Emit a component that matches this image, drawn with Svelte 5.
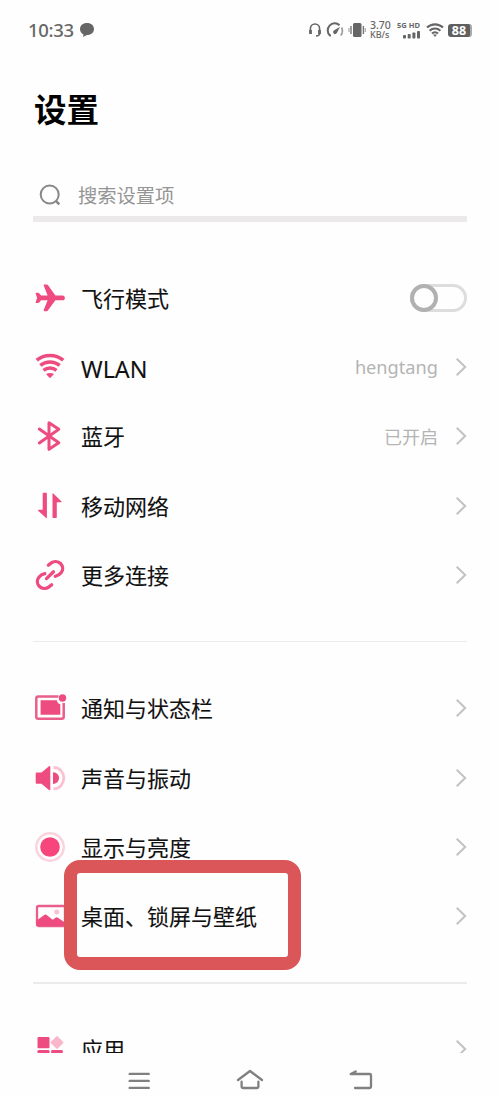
<script>
  const groups = [
    [
      { icon: 'plane', label: '飞行模式', toggle: true },
      { icon: 'wifi', label: 'WLAN', value: 'hengtang', latin: true },
      { icon: 'bluetooth', label: '蓝牙', value: '已开启' },
      { icon: 'data', label: '移动网络' },
      { icon: 'link', label: '更多连接' },
    ],
    [
      { icon: 'notify', label: '通知与状态栏' },
      { icon: 'sound', label: '声音与振动' },
      { icon: 'display', label: '显示与亮度' },
      { icon: 'wallpaper', label: '桌面、锁屏与壁纸', marked: true },
    ],
    [{ icon: 'apps', label: '应用' }],
  ];
</script>

<div class="phone">
  <header class="status">
    <span class="time">10:33</span>
    <svg class="bubble" width="16" height="16" viewBox="0 0 16 16" fill="#666">
      <path d="M8 1C3.800 1 1 3.600 1 7c0 2.500 1.300 4.400 3.500 5.400L4 15l4-2c4.200 0 7-2.600 7-6S12.200 1 8 1z" />
    </svg>
    <div class="tray">
      <svg width="14" height="16" viewBox="0 0 14 16" fill="none" stroke="#666" stroke-width="1.600">
        <path d="M2.400 10V6.800a4.600 4.800 0 0 1 9.200 0V11c0 2-1 3-3.600 3" />
        <path d="M2.500 8v4M11.500 8v4" stroke-width="2.800" />
      </svg>
      <svg width="18" height="16" viewBox="0 0 18 16" fill="none" stroke="#666" stroke-width="2">
        <path d="M5 13.600H4A6.900 6.900 0 0 1 13.500 3.200" />
        <path d="M15.500 5.500c1.400 2.600 1 5.700-.8 8" stroke="#999" stroke-width="1.600" />
        <path d="M14 4.800L11 10.800A2 2 0 1 1 8.300 8.300z" fill="#666" stroke="none" />
      </svg>
      <svg width="18" height="16" viewBox="0 0 18 16" fill="#666">
        <rect x="5" y="1" width="8.500" height="14" rx="1.500" />
        <path d="M3 4v8M15.400 4v8" stroke="#777" stroke-width="1.400" />
        <path d="M1 6v4M17.300 6v4" stroke="#aaa" stroke-width="1.200" />
      </svg>
      <div class="speed"><span>3.70</span><span>KB/s</span></div>
      <div class="cell">
        <span>5G HD</span>
        <svg width="18" height="9" viewBox="0 0 18 9" fill="#666">
          <rect x="0" y="5" width="3" height="3.500" rx=".8" /><rect x="4.700" y="4" width="3" height="4.500" rx=".8" />
          <rect x="9.400" y="2.500" width="3" height="6" rx=".8" /><rect x="14" y="1" width="3" height="7.500" rx=".8" />
        </svg>
      </div>
      <svg class="net" width="18" height="16" viewBox="0 0 18 16" fill="none" stroke="#666" stroke-width="2.100">
        <path d="M1 5.600a11.500 11.500 0 0 1 16 0M3.600 8.700a7.800 7.800 0 0 1 10.800 0M6 11.500a4.300 4.300 0 0 1 6 0" />
        <path d="M7 12.600h4L9 15z" fill="#666" stroke="none" />
      </svg>
      <div class="battery">88</div>
    </div>
  </header>

  <h1>设置</h1>

  <div class="search">
    <svg width="24" height="24" viewBox="0 0 24 24" fill="none" stroke="#888" stroke-width="2">
      <circle cx="11.700" cy="11.500" r="9" /><path d="M18 18l3.300 3.300" stroke-width="2.500" />
    </svg>
    <span>搜索设置项</span>
  </div>

  <main>
    {#each groups as group}
      <section>
        {#each group as row}
          <div class="row" class:latin={row.latin}>
            <svg class="icon" width="32" height="32" viewBox="0 0 32 32" fill="#ee4c80">
              {#if row.icon === 'plane'}
                <path d="M2.400 10.700h1.700c.5 0 .8.200 1 .5l2 2.300h6.500L9.700 3.600c-.2-.7.100-1.200.8-1.200h2.300c.5 0 .8.200 1.100.6l7.500 10.500h7c1.600 0 2.500 1.100 2.500 2.400s-.9 2.400-2.500 2.400h-7l-7.500 10.300c-.3.400-.6.600-1.100.6h-2.300c-.7 0-1-.5-.8-1.200l3.900-9.700H7.100l-2 2.300c-.2.300-.5.500-1 .5H2.400c-.6 0-.9-.4-.7-1l1.400-4.100-1.400-4.300c-.2-.6.100-1 .7-1z" />
              {:else if row.icon === 'wifi'}
                <g fill="none" stroke="#ee4c80" stroke-width="3.500">
                  <path d="M2.700 9.200a21 21 0 0 1 26.600 0M6.300 14.300a15.500 15.500 0 0 1 19.400 0M9.500 19.300a10.500 10.500 0 0 1 13 0" />
                </g>
                <path d="M12 23.100q4-2.200 8 0l-3.200 3.500q-.8.800-1.600 0z" />
              {:else if row.icon === 'bluetooth'}
                <path d="M5.300 9.100L24.800 22.800 15 29.300V2.700l9.800 6.500L5.300 22.900" fill="none" stroke="#ee4c80" stroke-width="3" stroke-linejoin="round" stroke-linecap="round" />
              {:else if row.icon === 'data'}
                <path d="M8.700 3.600q0-.8.800-.8h2.600q.8 0 .8.800v24q0 1-.8.400L4.200 20.700q-.8-1 .3-1h4.200z" />
                <path d="M18.500 3.900q0-1 .8-.4l8 7.800q.8 1-.3 1h-4.200v15q0 .8-.8.800h-2.700q-.8 0-.8-.8z" />
              {:else if row.icon === 'link'}
                <g fill="none" stroke="#ee4c80" stroke-width="3.300" stroke-linecap="round">
                  <path d="M14.300 6.300l2.700-2.200c3-2.300 7-2 9.500.4 2.700 2.700 2.800 6.500.6 9.300-1.300 1.700-3.400 3-5.900 3.500" />
                  <path d="M17.700 25.700L15 27.900c-3 2.300-7 2-9.500-.4-2.700-2.700-2.800-6.500-.6-9.300 1.300-1.700 3.400-3 5.900-3.500" />
                  <path d="M12.500 19.600l7-6.800" />
                </g>
              {:else if row.icon === 'notify'}
                <path d="M24.500 4.500H4.300a2 2 0 0 0-2 2v18.300a2 2 0 0 0 2 2h23.400a2 2 0 0 0 2-2V11" fill="none" stroke="#e95e8a" stroke-width="2.500" />
                <path d="M6.600 8.300h16.300q.3 3 3.400 4v10.500H6.600z" />
                <circle cx="28.500" cy="6" r="3.700" />
              {:else if row.icon === 'sound'}
                <path d="M2.700 10.500h4.800L15 4.300q1.300-.9 1.300.6v22.400q0 1.500-1.300.6l-7.500-6.200H2.700q-1 0-1-1v-9.200q0-1 1-1z" />
                <path d="M19 10.300c8 .4 8 11.200 0 11.600z" />
                <path d="M19.500 5.300c13.700.4 13.700 21.200 0 21.600" fill="none" stroke="#fac1d2" stroke-width="2.800" />
              {:else if row.icon === 'display'}
                <circle cx="16" cy="16" r="13.700" fill="none" stroke="#fad3de" stroke-width="2.500" />
                <circle cx="16" cy="16" r="9.800" fill="#f7467b" />
              {:else if row.icon === 'wallpaper'}
                <rect x="3" y="6" width="28" height="20" rx="1.500" fill="none" stroke="#e95e8a" stroke-width="2.300" />
                <path d="M2.500 20.500l8.200-5.700q1-.5 2 .2l6 4.800 3.200-2.300q1-.5 2 .2l7 4.800V26H2.500z" />
                <circle cx="22.700" cy="12" r="2.500" fill="#fac1d2" />
              {:else}
                <rect x="3.500" y="4" width="12" height="11.300" rx="1" />
                <rect x="18.200" y="4.700" width="9.600" height="9.600" rx="1" fill="#fab6cb" transform="rotate(45 23 9.500)" />
                <rect x="3.500" y="17" width="12" height="12" rx="1.300" />
                <rect x="17.200" y="17" width="11.600" height="12" rx="1.300" />
              {/if}
            </svg>
            <span class="label">{row.label}{#if row.marked}<i class="mark"></i>{/if}</span>
            {#if row.toggle}
              <span class="switch"><i></i></span>
            {:else}
              {#if row.value}<span class="value">{row.value}</span>{/if}
              <svg class="chevron" width="12" height="20" viewBox="0 0 12 20" fill="none" stroke="#c2c2c2" stroke-width="2">
                <path d="M1.700 1.700L10.200 10l-8.500 8.300" />
              </svg>
            {/if}
          </div>
        {/each}
      </section>
    {/each}
  </main>

  <nav>
    <svg width="28" height="28" viewBox="0 0 28 28" fill="none" stroke="#808080" stroke-width="2.400" stroke-linecap="round">
      <path d="M4.700 6.900h19M4.700 13.900h19M4.700 20.900h19" />
    </svg>
    <svg width="28" height="28" viewBox="0 0 28 28" fill="none" stroke="#808080" stroke-width="2.300" stroke-linecap="round" stroke-linejoin="round">
      <path d="M2 13L14 4l12 9M5.600 14.700v4.600q0 1.700 1.700 1.700h13.400q1.700 0 1.700-1.700v-4.600" />
    </svg>
    <svg width="28" height="28" viewBox="0 0 28 28" fill="none" stroke="#808080" stroke-width="2.300" stroke-linecap="round" stroke-linejoin="round">
      <path d="M8.700 4.500L3.700 7h19q1.300 0 1.300 1.300v11.400q0 1.300-1.300 1.300H8" />
    </svg>
  </nav>
</div>

<style>
  :global(body) { background: #fefefe; }
  .phone {
    width: 500px;
    height: 1097px;
    display: flex;
    flex-direction: column;
    overflow: hidden;
    background: #fefefe;
    font-family: "Noto Sans CJK SC", sans-serif;
    color: #111;
  }
  .status {
    display: flex;
    align-items: center;
    height: 60px;
    padding: 0 28px;
    box-sizing: border-box;
    flex: none;
    color: #666;
  }
  .time { font: 500 18.500px/24px "Noto Sans", sans-serif; letter-spacing: -.3px; width: 45px; white-space: nowrap; }
  .bubble { margin-left: 6px; }
  .tray { display: flex; align-items: center; margin-left: auto; }
  .tray > svg { margin-right: 4px; }
  .speed, .cell { display: flex; flex-direction: column; font-family: "Noto Sans", sans-serif; font-weight: 500; white-space: nowrap; }
  .speed { width: 23px; font-size: 10.500px; line-height: 9px; }
  .speed span:last-child { font-size: 9px; }
  .cell { width: 24px; margin-left: 4px; font-size: 7.500px; line-height: 9px; font-weight: 700; }
  .cell svg { align-self: flex-end; }
  .net { margin-left: 5px; }
  .battery {
    width: 22px;
    height: 13px;
    border-radius: 3px;
    border-right: 2px solid #aaa;
    background: #606060;
    color: #fff;
    font: 700 12.500px/13px "Noto Sans", sans-serif;
    text-align: center;
  }
  h1 { margin: 24px 0 0 34px; font-size: 32.500px; line-height: 48px; font-weight: 700; color: #000; }
  .search {
    display: flex;
    align-items: center;
    height: 42px;
    margin: 42px 33px 0;
    padding: 0 5px;
    border-bottom: 6px solid #ece9ea;
    color: #959595;
    font-size: 19.300px;
    flex: none;
  }
  .search span { margin-left: 16px; line-height: 28px; }
  main { margin-top: 41px; height: 790px; overflow: hidden; flex: none; }
  section { padding: 0 34px; }
  section + section { margin-top: 31px; padding-top: 32.500px; position: relative; }
  section + section::before { content: ""; position: absolute; left: 33px; right: 33px; top: 0; height: 1.500px; background: #ebebeb; }
  .row { display: flex; align-items: center; height: 69.400px; }
  .icon { flex: none; overflow: visible; }
  .label { position: relative; margin: -2px 0 0 15px; font-size: 22px; line-height: 32px; white-space: nowrap; -webkit-text-stroke: .1px #111; }
  .latin .label, .latin .value { font-family: "Noto Sans", sans-serif; }
  .latin .label { margin-top: 3px; font-size: 23.300px; }
  .latin .value { font-size: 18.200px; }
  .mark {
    position: absolute;
    left: -17.500px;
    top: -39px;
    width: 211px;
    height: 84px;
    border: 13px solid #da5659;
    border-radius: 16px;
  }
  .value { margin-left: auto; color: #b4b4b4; font-size: 18px; }
  .chevron { margin-left: auto; margin-right: -1px; }
  .value + .chevron { margin-left: 17px; }
  .switch {
    width: 57px;
    height: 28px;
    margin-left: auto;
    margin-right: -1px;
    border: 3px solid #ddd;
    border-radius: 14px;
    box-sizing: border-box;
  }
  .switch i {
    display: block;
    width: 20px;
    height: 20px;
    margin: -3px;
    border: 4px solid #b1b1b1;
    border-radius: 50%;
  }
  nav { display: flex; justify-content: center; gap: 83px; padding-top: 14px; flex: none; }
</style>
